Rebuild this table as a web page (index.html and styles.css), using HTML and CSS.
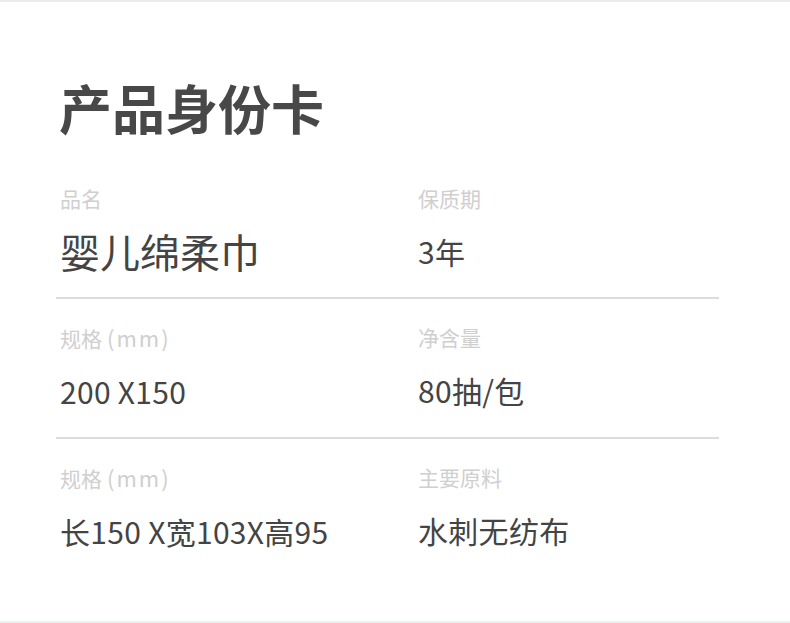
FILE: index.html
```html
<!DOCTYPE html>
<html lang="zh-CN">
<head>
<meta charset="utf-8">
<title>产品身份卡</title>
<link rel="stylesheet" href="styles.css">
</head>
<body>
<div class="page">
  <h1 class="title">产品身份卡</h1>
  <div class="rows">
    <div class="row">
      <div class="cell"><div class="label">品名</div><div class="value value-big">婴儿绵柔巾</div></div>
      <div class="cell"><div class="label">保质期</div><div class="value">3年</div></div>
    </div>
    <div class="row">
      <div class="cell"><div class="label">规格<span class="unit">(mm)</span></div><div class="value">200 X150</div></div>
      <div class="cell"><div class="label">净含量</div><div class="value">80抽/包</div></div>
    </div>
    <div class="row row-last">
      <div class="cell"><div class="label">规格<span class="unit">(mm)</span></div><div class="value">长150 X宽103X高95</div></div>
      <div class="cell"><div class="label">主要原料</div><div class="value">水刺无纺布</div></div>
    </div>
  </div>
</div>
</body>
</html>
```

FILE: styles.css
```css
html, body {
  margin: 0;
  padding: 0;
  background: #ffffff;
}
body {
  font-family: "Noto Sans CJK SC", "Noto Sans", sans-serif;
  color: #444444;
}
.page {
  width: 790px;
  height: 623px;
  box-sizing: border-box;
  border-top: 2px solid #ececec;
  border-bottom: 2px solid #ebf1ec;
  padding: 79px 0 0 56px;
}
.title {
  margin: 0;
  font-size: 53px;
  line-height: 52px;
  font-weight: 700;
  color: #484848;
  padding-left: 3px;
}
.rows {
  margin-top: 27px;
  width: 663px;
}
.row {
  display: grid;
  grid-template-columns: 358px 1fr;
  padding: 28px 0 26px;
  border-bottom: 2px solid #dcdcdc;
}
.row-last {
  border-bottom: none;
}
.cell {
  display: flex;
  flex-direction: column;
  gap: 22px;
  padding-left: 4px;
}
.label {
  font-size: 21px;
  line-height: 21px;
  color: #cfcfcf;
}
.unit {
  font-size: 22px;
  letter-spacing: 2px;
  margin-left: 5px;
}
.value {
  font-size: 30px;
  line-height: 40px;
  color: #444444;
  letter-spacing: 0.3px;
}
.value-big {
  font-size: 40px;
  letter-spacing: 0;
}
```
